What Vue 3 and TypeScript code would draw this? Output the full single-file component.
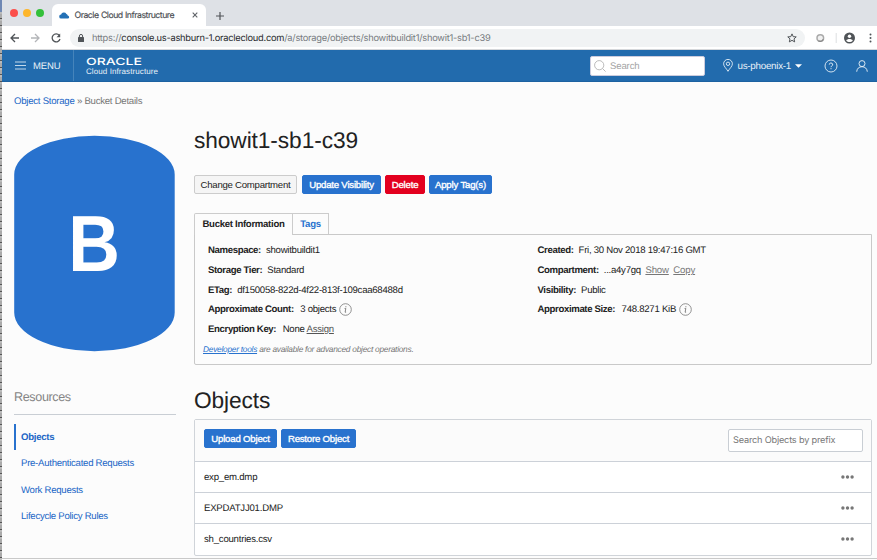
<script setup lang="ts">
interface Detail {
  label: string
  value: string
  wide?: boolean
  info?: boolean
  links?: string[]
}

const leftDetails: Detail[] = [
  { label: 'Namespace:', value: 'showitbuildit1' },
  { label: 'Storage Tier:', value: 'Standard' },
  { label: 'ETag:', value: 'df150058-822d-4f22-813f-109caa68488d' },
  { label: 'Approximate Count:', value: '3 objects', wide: true, info: true },
  { label: 'Encryption Key:', value: 'None', wide: true, links: ['Assign'] },
]

const rightDetails: Detail[] = [
  { label: 'Created:', value: 'Fri, 30 Nov 2018 19:47:16 GMT' },
  { label: 'Compartment:', value: '...a4y7gq', links: ['Show', 'Copy'] },
  { label: 'Visibility:', value: 'Public' },
  { label: 'Approximate Size:', value: '748.8271 KiB', wide: true, info: true },
]

const columns: Detail[][] = [leftDetails, rightDetails]
const resources: string[] = ['Objects', 'Pre-Authenticated Requests', 'Work Requests', 'Lifecycle Policy Rules']
const objects: string[] = ['exp_em.dmp', 'EXPDATJJ01.DMP', 'sh_countries.csv']
</script>

<template>
  <div class="screen">
    <div class="desktop-edge"></div>
    <div class="window">
      <div class="tabstrip">
        <div class="lights"><i class="red"></i><i class="yellow"></i><i class="green"></i></div>
        <div class="tab">
          <svg class="cloud" width="11" height="7" viewBox="0 0 11 7"><path d="M2.3 6.6a2 2 0 0 1-.2-4A2.9 2.9 0 0 1 7.4 2a2.3 2.3 0 0 1 1.3 1.5 1.6 1.6 0 0 1 .4 3.1z" fill="#2370b5" /></svg>
          <span class="tab-title">Oracle Cloud Infrastructure</span>
          <svg class="tab-close" width="6" height="6" viewBox="0 0 6 6"><path d="M.7.7l4.6 4.6M5.3.7L.7 5.3" stroke="#5f6368" stroke-width="1.1" /></svg>
        </div>
        <svg class="new-tab" width="8" height="8" viewBox="0 0 8 8"><path d="M4 0v8M0 4h8" stroke="#505458" stroke-width="1.2" /></svg>
      </div>

      <div class="toolbar">
        <svg class="nav-icons" width="56" height="12" viewBox="0 0 56 12" fill="none" stroke-width="1.3">
          <path d="M9 6H1M5 2L1 6l4 4" stroke="#505458" />
          <path d="M21 6h8M25 2l4 4-4 4" stroke="#b3b5b8" />
          <path d="M49.3 3.4A4 4 0 1 0 50 7" stroke="#505458" />
          <path d="M50.2 1.5v3.7h-3.7z" fill="#505458" />
        </svg>
        <div class="address">
          <svg class="lock" width="6" height="8" viewBox="0 0 6 8"><rect x="0" y="3" width="6" height="5" rx=".6" fill="#505458" /><path d="M1.4 3V2a1.6 1.6 0 0 1 3.2 0v1" stroke="#505458" fill="none" /></svg>
          <span class="url">https://<b>console.us-ashburn-1.oraclecloud.com</b>/a/storage/objects/showitbuildit1/showit1-sb1-c39</span>
          <svg class="star" width="10" height="10" viewBox="0 0 9 9"><path d="M4.5.8l1.1 2.5 2.7.2-2 1.8.6 2.7-2.4-1.4L2.1 8l.6-2.7-2-1.8 2.7-.2z" fill="none" stroke="#505458" stroke-width=".9" /></svg>
        </div>
        <svg class="chrome-right" width="62" height="14" viewBox="0 0 62 14">
          <circle cx="10.3" cy="7" r="3.3" fill="#f1f1f1" stroke="#aaa" stroke-width="1.5" />
          <path d="M13.3 8.3a3.4 3.4 0 0 1-5 1.5" stroke="#888" fill="none" stroke-width="1.1" />
          <path d="M26.2 2v10" stroke="#dddfe1" />
          <circle cx="39.5" cy="7" r="5.5" fill="#505458" />
          <circle cx="39.5" cy="5.2" r="1.7" fill="#fff" />
          <path d="M36.2 9.5c1.2-2 5.4-2 6.6 0-1.7 2-4.9 2-6.600 0z" fill="#fff" />
          <g fill="#505458"><circle cx="60.500" cy="3.600" r="1" /><circle cx="60.500" cy="7" r="1" /><circle cx="60.500" cy="10.400" r="1" /></g>
        </svg>
      </div>

      <header class="header">
        <div class="menu">
          <svg width="11" height="9" viewBox="0 0 11 9"><path d="M0 1h11M0 4.500h11M0 8h11" stroke="#d5e4f1" stroke-width=".9" /></svg>
          <span>MENU</span>
        </div>
        <div class="brand">
          <span class="oracle">ORACLE</span>
          <span class="oci">Cloud Infrastructure</span>
        </div>
        <div class="search">
          <svg width="12" height="12" viewBox="0 0 12 12" fill="none" stroke="#a9a9a9" stroke-width=".8"><circle cx="5.200" cy="5.200" r="4.600" /><path d="M8.500 8.500l3.100 3.100" /></svg>
          <span>Search</span>
        </div>
        <div class="region">
          <svg width="10" height="13" viewBox="0 0 10 13" fill="none" stroke="#e4eef6" stroke-width=".9"><path d="M5 12.300C3.500 9.600.6 7.400.6 4.800a4.400 4.400 0 0 1 8.800 0C9.400 7.400 6.500 9.600 5 12.300z" /><circle cx="5" cy="4.800" r="1.700" /></svg>
          <span>us-phoenix-1</span>
          <svg class="caret" width="7" height="4" viewBox="0 0 7 4"><path d="M0 .2h7L3.500 3.800z" fill="#fff" /></svg>
        </div>
        <svg class="help" width="14" height="14" viewBox="0 0 14 14"><circle cx="7" cy="7" r="6" fill="none" stroke="#e4eef6" stroke-width=".9" /><path d="M5.300 5.600a1.700 1.600 0 1 1 2.500 1.400c-.6.3-.8.6-.8 1.200M7 9.200v1" fill="none" stroke="#e4eef6" /></svg>
        <svg class="user" width="12" height="12" viewBox="0 0 12 12" fill="none" stroke="#e4eef6" stroke-width=".95"><circle cx="6" cy="3.600" r="3" /><path d="M.7 11.700c.2-3 2.200-5 5.300-5s5.100 2 5.300 5" /></svg>
      </header>

      <nav class="crumbs"><a>Object Storage</a> » Bucket Details</nav>

      <div class="body">
        <aside class="side">
          <svg class="bucket" width="162" height="217" viewBox="0 0 162 217">
            <path d="M.2 39.500A80.250 38.700 0 0 1 160.700 39.500V177.500A80.250 38.700 0 0 1 .2 177.500z" fill="#2872ce" />
            <text transform="translate(54.300 136) scale(.9 1)" class="bucket-letter">B</text>
          </svg>
          <h2>Resources</h2>
          <ul>
            <li v-for="(r, i) in resources" :key="r" :class="{ active: i === 0 }"><a>{{ r }}</a></li>
          </ul>
        </aside>

        <main class="main">
          <h1>showit1-sb1-c39</h1>
          <div class="actions">
            <button class="btn plain">Change Compartment</button>
            <button class="btn visibility">Update Visibility</button>
            <button class="btn danger">Delete</button>
            <button class="btn apply">Apply Tag(s)</button>
          </div>
          <div class="tabs"><span class="on">Bucket Information</span><span class="off">Tags</span></div>
          <section class="panel">
            <div class="details">
              <div v-for="(col, c) in columns" :key="c" class="col">
                <div v-for="d in col" :key="d.label" class="detail">
                  <strong :class="{ wide: d.wide }">{{ d.label }}</strong>
                  <span>{{ d.value }}</span>
                  <svg v-if="d.info" width="13" height="13" viewBox="0 0 13 13"><circle cx="6.500" cy="6.500" r="5.800" fill="none" stroke="#777" stroke-width=".8" /><path d="M5.600 5.500h1.200L6.100 9.200h1M6.900 3.200v1.100" fill="none" stroke="#777" stroke-width=".9" /></svg>
                  <a v-for="l in d.links" :key="l" :class="{ assign: l === 'Assign' }">{{ l }}</a>
                </div>
              </div>
            </div>
            <p class="note"><a>Developer tools</a> are available for advanced object operations.</p>
          </section>

          <h1 class="objects-title">Objects</h1>
          <section class="list">
            <div class="list-head">
              <button class="btn upload">Upload Object</button>
              <button class="btn restore">Restore Object</button>
              <div class="prefix">Search Objects by prefix</div>
            </div>
            <div v-for="o in objects" :key="o" class="row">
              <span>{{ o }}</span>
              <svg width="13" height="4" viewBox="0 0 13 4" fill="#777"><circle cx="1.900" cy="2" r="1.700" /><circle cx="6.500" cy="2" r="1.700" /><circle cx="11.100" cy="2" r="1.700" /></svg>
            </div>
          </section>
        </main>
      </div>
      <div class="window-bottom"></div>
    </div>
  </div>
</template>

<style>
body { margin: 0; overflow: hidden; }
</style>

<style scoped>
* { box-sizing: border-box; }
.screen { display: flex; width: 877px; height: 560px; overflow: hidden; font: 9.6px/12px "Liberation Sans", sans-serif; letter-spacing: -.15px; color: #222; background: #fcfcfc; text-rendering: geometricPrecision; }
svg { display: block; flex: none; }
span, strong, a { white-space: nowrap; }
.desktop-edge { width: 2px; flex: none; background: linear-gradient(#6f88b4 0 12px, transparent 12px), repeating-linear-gradient(#aaa 0 4px, #555 4px 5px, #bbb 5px 7px); }
.window { width: 875px; height: 560px; display: flex; flex-direction: column; flex: none; }
.tabstrip { height: 26px; flex: none; background: #dee1e6; display: flex; align-items: center; }
.lights { display: flex; gap: 5px; margin-left: 7.5px; width: 42px; }
.lights i { width: 8px; height: 8px; border-radius: 50%; }
.red { background: #fb4f4b; }
.yellow { background: #fdb62c; }
.green { background: #34c03a; }
.tab { width: 154px; height: 22px; margin-top: 4px; background: #fff; border-radius: 6px 6px 0 0; display: flex; align-items: center; padding-left: 7px; }
.tab-title { font: 8.700px/12px Inter, sans-serif; letter-spacing: -.48px; word-spacing: .4px; -webkit-text-stroke: .15px; color: #4b4e52; margin: 1px 0 0 5px; width: 117px; }
.new-tab { margin: 5px 0 0 10px; }
.toolbar { height: 24px; flex: none; background: #fff; border-bottom: 1px solid #d5d7da; display: flex; align-items: center; }
.nav-icons { margin-left: 8px; }
.address { margin-left: 4px; width: 735px; height: 18px; border-radius: 10px; background: #f1f3f4; display: flex; align-items: center; padding: 0 8px 0 8px; }
.url { font: 9.300px/12px Inter, sans-serif; letter-spacing: -.25px; color: #777b80; margin: 2px 0 0 8px; flex: 1; }
.url b { font-weight: 400; color: #26282b; }
.chrome-right { margin-left: 5px; overflow: visible; }
.header { height: 32px; flex: none; background: #226bad; color: #e9f1f8; display: flex; align-items: center; border-bottom: 1px solid #1d62a1; }
.menu { width: 72px; height: 31px; border-right: 1px solid #4584bb; display: flex; align-items: center; padding-left: 13px; gap: 7px; font-size: 9.500px; }
.menu span, .search span, .region span { padding-top: 2px; }
.brand { width: 516px; padding: 3px 0 0 12px; display: flex; flex-direction: column; }
.oracle { font: 500 10px/9px Inter, sans-serif; letter-spacing: 0; color: #fff; transform: translateY(1px) scaleX(1.4); transform-origin: left; align-self: flex-start; }
.oci { font-size: 8px; line-height: 10px; letter-spacing: .09px; padding-top: 1px; }
.search { width: 115px; height: 20px; background: #fff; border-radius: 2px; border: 1px solid #ccd; display: flex; align-items: center; padding-left: 3px; gap: 4px; color: #a4a4a4; }
.region { margin-left: 18px; width: 101px; display: flex; align-items: center; font-size: 9.800px; }
.region span { margin-left: 4.500px; letter-spacing: -.26px; }
.caret { margin-left: 4px; }
.help { margin-left: -.5px; }
.user { margin-left: 18.500px; }
.crumbs { padding: 14px 0 0 12px; height: 53px; color: #777; letter-spacing: -.25px; flex: none; }
a { color: #2166c6; }
.body { display: flex; height: 422px; flex: none; }
.side { width: 162px; margin-left: 12px; flex: none; }
.bucket-letter { font: bold 79.500px "Liberation Sans", sans-serif; letter-spacing: 0; fill: #fff; }
.side h2 { font-weight: 400; font-size: 12.600px; line-height: 16px; letter-spacing: -.38px; color: #858585; margin: 37px 0 0; height: 25.500px; border-bottom: 1px solid #c9ced4; }
.side ul { list-style: none; margin: 9.500px 0 0; padding: 0; }
.side li { height: 26.300px; display: flex; align-items: center; padding: 2px 0 0 7px; letter-spacing: -.27px; }
.side li.active { border-left: 2px solid #2872ce; padding-left: 5px; font-weight: 700; }
.main { margin-left: 18px; width: 679px; flex: none; }
h1 { font-size: 22.700px; line-height: 26px; font-weight: 400; letter-spacing: -.08px; margin: -8px 0 0; color: #222; }
.actions { display: flex; margin-top: 22px; }
.btn { font: 9.600px/17px "Liberation Sans", sans-serif; letter-spacing: -.18px; height: 19px; border: 1px solid #2872ce; background: #2872ce; color: #fff; border-radius: 2px; padding: 0; margin: 0 5px 0 0; -webkit-text-stroke: .35px #fff; white-space: nowrap; text-align: center; }
.plain { width: 103px; background: #f5f5f5; border-color: #ccc; color: #222; letter-spacing: -.25px; -webkit-text-stroke: 0; }
.visibility { width: 79px; letter-spacing: -.2px; margin-right: 4px; }
.danger { width: 40px; background: #e3001f; border-color: #e3001f; margin-right: 4px; }
.apply { width: 63px; }
.tabs { margin-top: 19px; display: flex; height: 21px; position: relative; }
.tabs span { line-height: 21px; font-weight: 700; text-align: center; border: 1px solid #ccc; border-bottom: 0; letter-spacing: -.3px; }
.on { width: 99px; background: #fcfcfc; height: 22px; border-radius: 2px 0 0; }
.off { width: 36px; border-left: 0 !important; color: #2872ce; height: 21px; }
.panel { border: 1px solid #c9c9c9; height: 131px; width: 678px; padding: 5.500px 0 0 13px; border-radius: 0 0 2px 2px; }
.details { display: flex; height: 100px; }
.col { width: 329.500px; }
.detail { display: flex; align-items: center; height: 19.700px; }
.detail strong, .detail span, .detail a { padding-top: 2px; }
.detail strong { letter-spacing: -.36px; margin-right: 5px; }
.detail strong.wide { margin-right: 6.500px; }
.detail span { letter-spacing: -.26px; }
.detail svg { margin: 1px 0 0 3px; }
.detail a { color: #777; text-decoration: underline; margin-left: 4.500px; }
.detail a.assign { margin-left: 2px; color: #555; letter-spacing: -.25px; }
.note { margin: 2px 0 0 -5px; font-size: 8.300px; line-height: 12px; font-style: italic; color: #777; letter-spacing: -.24px; }
.note a { text-decoration: underline; color: #2872ce; }
.objects-title { margin-top: 22px; }
.list { margin-top: 6px; border: 1px solid #d0d4d9; border-radius: 2px; width: 678px; background: #fff; }
.list-head { height: 40.500px; display: flex; align-items: center; padding: 0 8px 0 9px; background: #fbfbfb; }
.list-head .btn { margin-top: -4px; }
.upload { width: 73px; margin-right: 4px; }
.restore { width: 75px; letter-spacing: -.2px; }
.prefix { margin-left: auto; width: 135px; height: 23px; border: 1px solid #c9ced4; border-radius: 2px; background: #fff; padding-left: 4px; font: 9.200px/22px Inter, sans-serif; letter-spacing: -.2px; color: #777; }
.row { height: 31.400px; border-top: 1px solid #ccd1d8; display: flex; align-items: center; justify-content: space-between; padding: 0 17.500px 0 9px; }
.row span { padding-top: 2px; letter-spacing: -.22px; }
.window-bottom { margin-top: auto; height: 2px; border-top: 1px solid #c9c9c9; flex: none; }
</style>
